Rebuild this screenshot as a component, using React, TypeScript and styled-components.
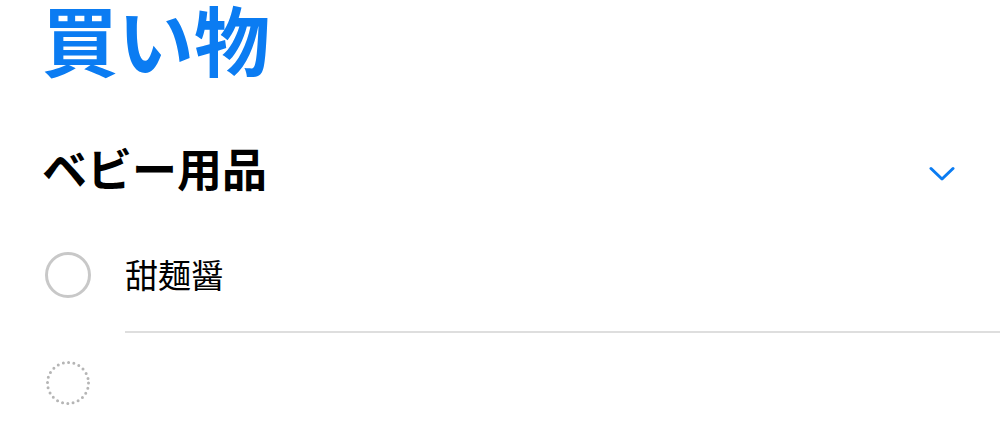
import React from 'react';
import styled, { createGlobalStyle } from 'styled-components';

const GlobalStyle = createGlobalStyle`
  html, body {
    margin: 0;
    padding: 0;
    background: #ffffff;
  }
  body {
    font-family: "Noto Sans CJK JP", "Noto Sans", sans-serif;
    color: #000;
  }
`;

const Page = styled.div`
  width: 1000px;
  height: 440px;
  overflow: hidden;
  display: flex;
  flex-direction: column;
`;

const Title = styled.h1`
  margin: 0;
  padding-left: 42px;
  font-size: 76px;
  line-height: 1;
  font-weight: 700;
  color: #0b7cf2;
`;

const SectionHeader = styled.div`
  display: flex;
  align-items: flex-start;
  justify-content: space-between;
  padding: 0 45px 0 42px;
  margin-top: 65px;
`;

const SectionTitle = styled.h2`
  margin: 0;
  font-size: 45px;
  line-height: 1.2;
  font-weight: 700;
`;

const Toggle = styled.div`
  padding-top: 25px;
  display: flex;
`;

const List = styled.div`
  margin-top: 22px;
  display: flex;
  flex-direction: column;
`;

const Row = styled.div`
  display: flex;
  align-items: stretch;
`;

const CheckCol = styled.div`
  width: 80px;
  padding-left: 45px;
  display: flex;
  align-items: center;
`;

const Content = styled.div<{ $divider?: boolean; $h: number }>`
  flex: 1;
  height: ${(p) => p.$h}px;
  display: flex;
  align-items: center;
  border-bottom: ${(p) => (p.$divider ? '2px solid #dedede' : 'none')};
  font-size: 33px;
  line-height: 1;
`;

const Check = ({ dotted }: { dotted?: boolean }) => (
  <svg width="46" height="46" viewBox="0 0 46 46">
    {dotted ? (
      <circle
        cx="23"
        cy="23"
        r="20.5"
        fill="none"
        stroke="#b5b5b5"
        strokeWidth="3"
        strokeLinecap="round"
        strokeDasharray="0 5.366"
      />
    ) : (
      <circle cx="23" cy="23" r="21.5" fill="none" stroke="#c8c8c8" strokeWidth="3" />
    )}
  </svg>
);

const Chevron = () => (
  <svg width="26" height="16" viewBox="0 0 26 16">
    <path
      d="M2 2.5 L13 13 L24 2.5"
      fill="none"
      stroke="#0b7cf2"
      strokeWidth="3"
      strokeLinecap="round"
      strokeLinejoin="round"
    />
  </svg>
);

export default function App() {
  return (
    <Page>
      <GlobalStyle />
      <Title>買い物</Title>
      <SectionHeader>
        <SectionTitle>ベビー用品</SectionTitle>
        <Toggle>
          <Chevron />
        </Toggle>
      </SectionHeader>
      <List>
        <Row>
          <CheckCol>
            <Check />
          </CheckCol>
          <Content $divider $h={114}>
            甜麺醤
          </Content>
        </Row>
        <Row>
          <CheckCol>
            <Check dotted />
          </CheckCol>
          <Content $h={100} />
        </Row>
      </List>
    </Page>
  );
}
